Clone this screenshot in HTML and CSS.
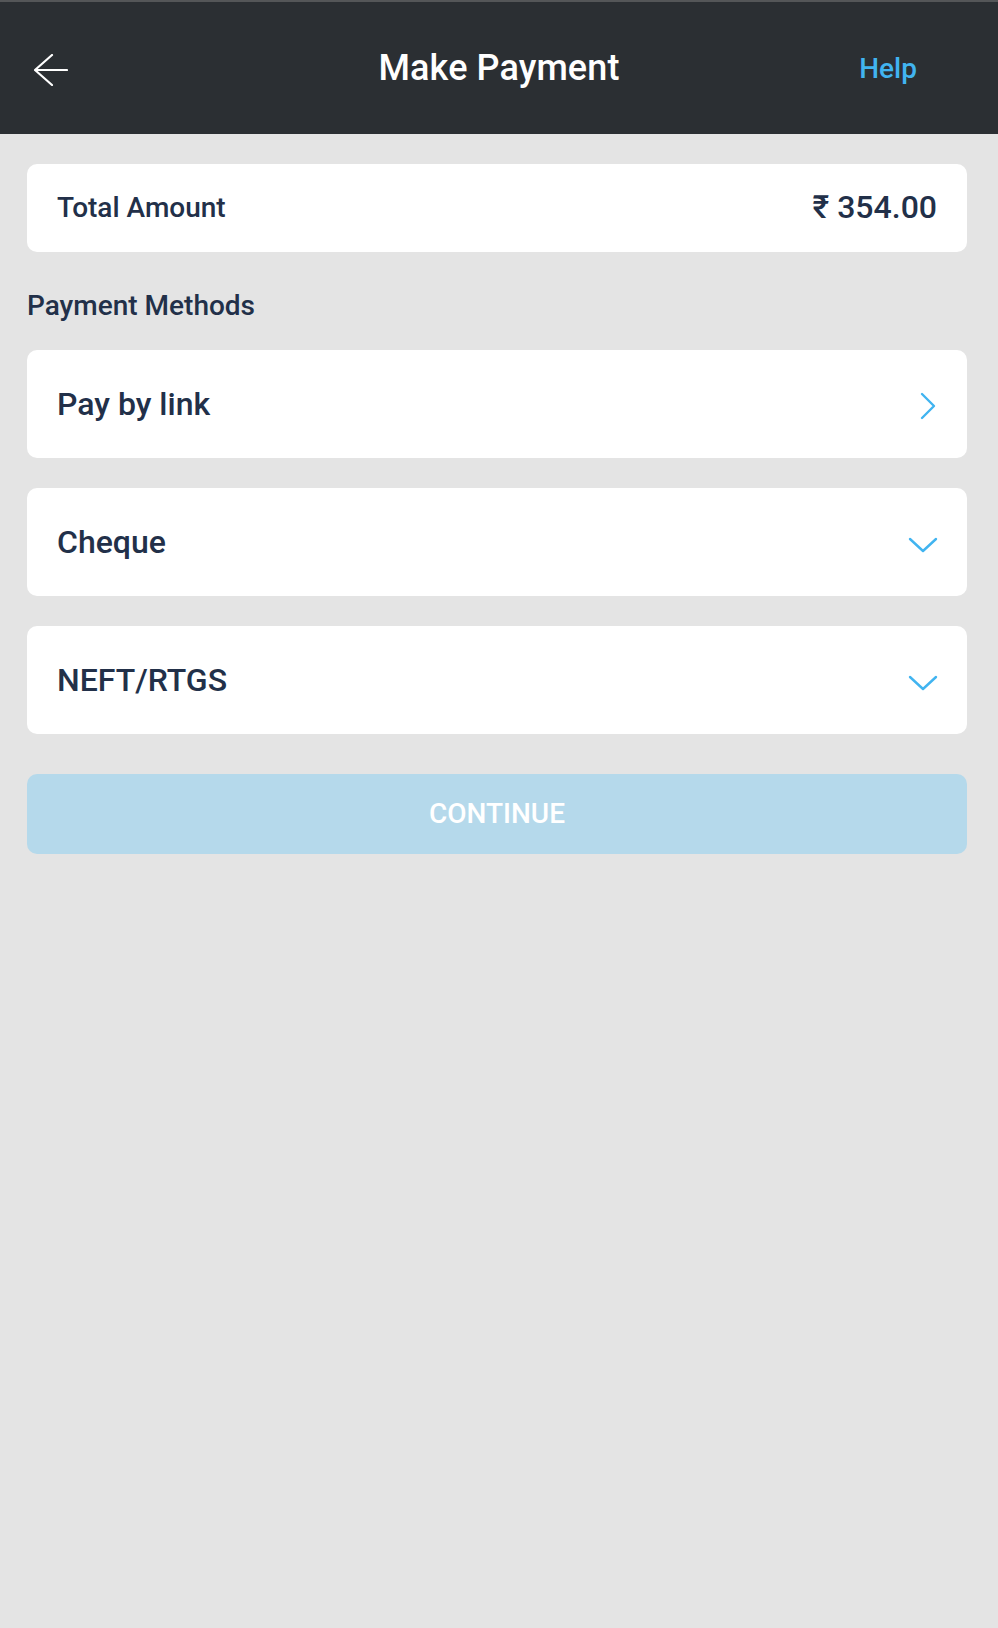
FILE: index.html
```html
<!DOCTYPE html>
<html lang="en">
<head>
<meta charset="utf-8">
<title>Make Payment</title>
<link rel="stylesheet" href="styles.css">
</head>
<body>
<header class="topbar">
  <div class="topbar-left">
    <svg class="back-icon" width="34" height="32" viewBox="0 0 34 32" aria-label="Back">
      <path d="M18 1 L1 16 L18 31 M1 16 H33" fill="none" stroke="#ffffff" stroke-width="2.2" stroke-linecap="round" stroke-linejoin="round"/>
    </svg>
  </div>
  <h1 class="topbar-title">Make Payment</h1>
  <div class="topbar-right"><a class="help-link">Help</a></div>
</header>

<main class="content">
  <section class="card total-card">
    <span class="total-label">Total Amount</span>
    <span class="total-value">₹ 354.00</span>
  </section>

  <h2 class="section-label">Payment Methods</h2>

  <div class="methods">
    <div class="card method">
      <span class="method-name">Pay by link</span>
      <svg class="chev-right" width="18" height="30" viewBox="0 0 18 30">
        <polyline points="3,3 15,15 3,27" fill="none" stroke="#41b4f0" stroke-width="2.4" stroke-linecap="round" stroke-linejoin="round"/>
      </svg>
    </div>
    <div class="card method">
      <span class="method-name">Cheque</span>
      <svg class="chev-down" width="30" height="18" viewBox="0 0 30 18">
        <polyline points="2,3 15,15 28,3" fill="none" stroke="#41b4f0" stroke-width="2.4" stroke-linecap="round" stroke-linejoin="round"/>
      </svg>
    </div>
    <div class="card method">
      <span class="method-name">NEFT/RTGS</span>
      <svg class="chev-down" width="30" height="18" viewBox="0 0 30 18">
        <polyline points="2,3 15,15 28,3" fill="none" stroke="#41b4f0" stroke-width="2.4" stroke-linecap="round" stroke-linejoin="round"/>
      </svg>
    </div>
  </div>

  <button class="continue-btn" type="button">CONTINUE</button>
</main>
</body>
</html>
```
FILE: styles.css
```css
* {
  box-sizing: border-box;
}

html, body {
  margin: 0;
  padding: 0;
}

body {
  background: #e4e4e4;
  font-family: Roboto, "Liberation Sans", Arial, sans-serif;
  color: #223049;
  min-height: 1628px;
}

.topbar {
  height: 134px;
  border-top: 2px solid #545658;
  background: #2b2f33;
  display: grid;
  grid-template-columns: 1fr auto 1fr;
  align-items: center;
}

.topbar-left {
  padding-left: 34px;
  display: flex;
  align-items: center;
}

.back-icon {
  display: block;
  margin-top: 4px;
}

.topbar-title {
  margin: 0;
  font-size: 36px;
  font-weight: 500;
  color: #ffffff;
  letter-spacing: 0.1px;
}

.topbar-right {
  justify-self: end;
  padding-right: 81px;
}

.help-link {
  font-size: 28px;
  font-weight: 500;
  color: #41b4f0;
}

.content {
  padding: 30px 31px 0 27px;
}

.card {
  background: #ffffff;
  border-radius: 10px;
  display: flex;
  align-items: center;
  justify-content: space-between;
}

.total-card {
  height: 88px;
  padding: 0 30px 2px 30px;
}

.total-label {
  font-size: 28px;
  font-weight: 500;
}

.total-value {
  font-size: 32px;
  font-weight: 500;
}

.section-label {
  margin: 38px 0 28px 0;
  font-size: 28px;
  font-weight: 500;
  line-height: 32px;
}

.methods {
  display: flex;
  flex-direction: column;
  gap: 30px;
}

.method {
  height: 108px;
  padding: 0 29px 0 30px;
}

.method-name {
  font-size: 32px;
  font-weight: 500;
}

.chev-right {
  display: block;
  margin-right: 1px;
  margin-top: 4px;
}

.chev-down {
  display: block;
  margin-top: 6px;
}

.continue-btn {
  display: block;
  width: 100%;
  height: 80px;
  margin-top: 40px;
  border: none;
  border-radius: 10px;
  background: #b5d9eb;
  color: #ffffff;
  font-family: Roboto, "Liberation Sans", Arial, sans-serif;
  font-size: 28px;
  font-weight: 500;
  padding: 0 0 2px 0;
}
```
